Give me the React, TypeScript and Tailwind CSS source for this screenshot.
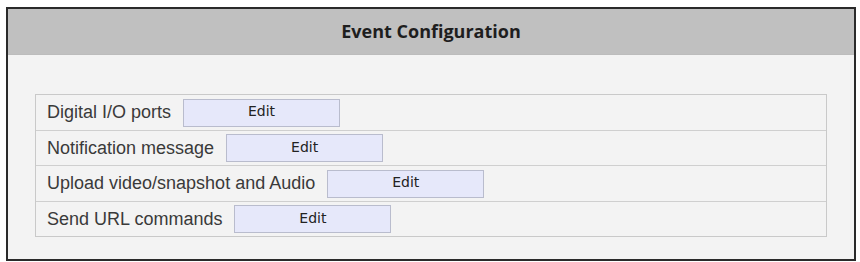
import React from "react";

const rows = [
  { label: "Digital I/O ports", h: "h-[35px]" },
  { label: "Notification message", h: "h-[35px]" },
  { label: "Upload video/snapshot and Audio", h: "h-[36px]" },
  { label: "Send URL commands", h: "h-[35px]" },
];

export default function App() {
  return (
    <div className="w-[860px] h-[262px] bg-white pt-[7px] pl-[6px] overflow-hidden">
      <div className="w-[850px] h-[254px] border-2 border-[#2a2a2a] bg-[#f3f3f3] flex flex-col">
        <div className="h-[46px] bg-[#c0c0c0] flex items-center justify-center border-b border-[#bcbcbc]">
          <span className="text-[18px] font-bold text-[#1e1e1e]" style={{ fontFamily: '"Open Sans", "DejaVu Sans", sans-serif' }}>
            Event Configuration
          </span>
        </div>
        <div className="pt-[39px] pl-[27px] pr-[27px]">
          <div className="border border-[#c9c9c9] flex flex-col">
            {rows.map((r, i) => (
              <div
                key={i}
                className={`${r.h} flex items-center pl-[11px] ${i > 0 ? "border-t border-[#cfcfcf]" : ""}`}
              >
                <span className="text-[18px] text-[#3a3a3a]" style={{ fontFamily: '"Liberation Sans", Arial, sans-serif' }}>
                  {r.label}
                </span>
                <div className="ml-[12px] w-[157px] h-[28px] bg-[#e6e8fa] border border-[#b9bccd] flex items-center justify-center">
                  <span className="text-[14px] text-[#222] mb-[2px]" style={{ fontFamily: '"DejaVu Sans", sans-serif' }}>
                    Edit
                  </span>
                </div>
              </div>
            ))}
          </div>
        </div>
      </div>
    </div>
  );
}
